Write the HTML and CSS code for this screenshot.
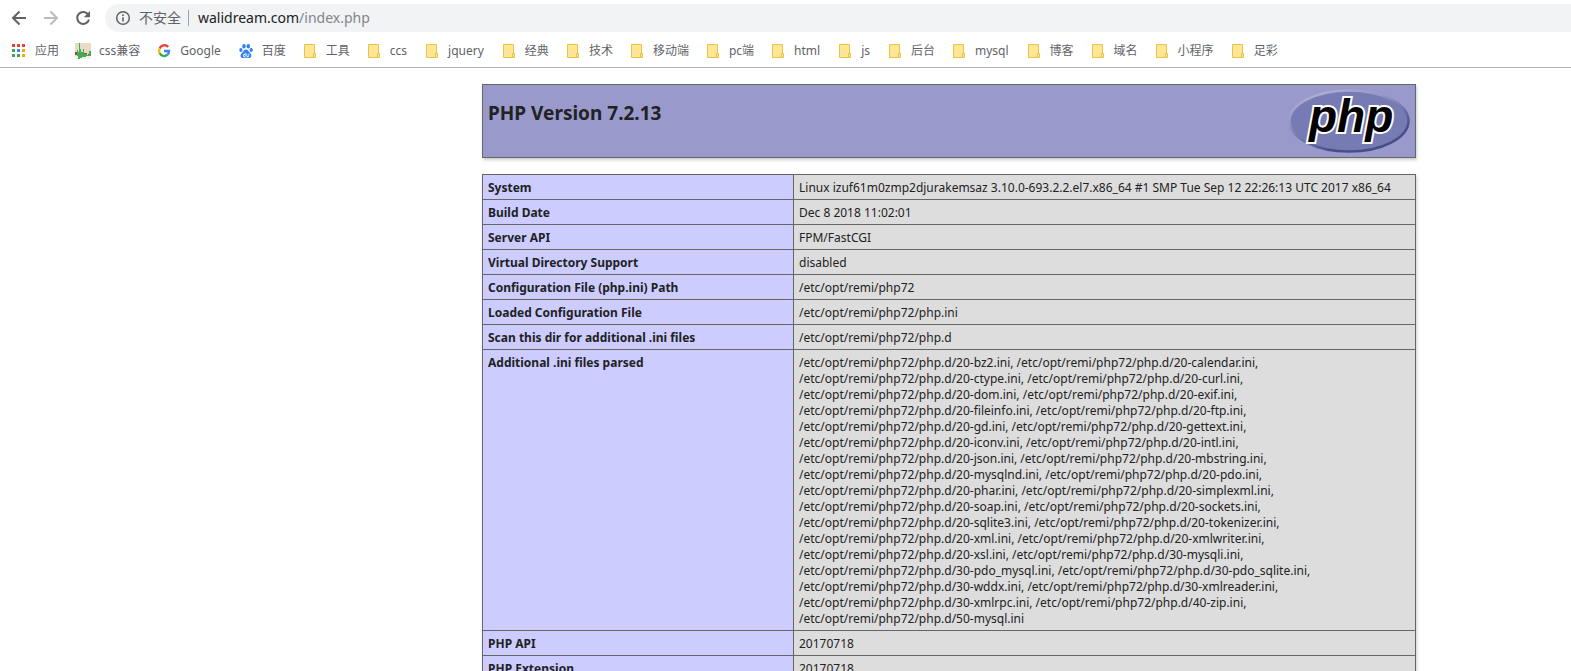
FILE: index.html
```html
<!DOCTYPE html>
<html lang="zh-CN">
<head>
<meta charset="utf-8">
<title>phpinfo()</title>
<link rel="stylesheet" href="styles.css">
</head>
<body>
<svg class="defs" aria-hidden="true">
  <symbol id="folder" viewBox="0 0 16 16">
    <path d="M2.500 1.500h10v13h-10z" fill="#ffe694" stroke="#e8c54a"/>
    <path d="M11.500 14.500v-4h2v4z" fill="#ffe694" stroke="#e8c54a"/>
  </symbol>
</svg>
<header class="browser">
  <div class="toolbar">
    <button class="nav" aria-label="Back"><svg viewBox="0 0 16 16"><path d="M15 8H2.500M8.500 1.500L2 8l6.500 6.500" fill="none" stroke="#5f6368" stroke-width="2"/></svg></button>
    <button class="nav" aria-label="Forward"><svg viewBox="0 0 16 16"><path d="M1 8h12.500M7.500 1.500L14 8l-6.500 6.500" fill="none" stroke="#babcbe" stroke-width="2"/></svg></button>
    <button class="nav" aria-label="Reload"><svg viewBox="0 0 16 16"><path d="M13.300 4.700A6 6 0 1 0 14 9.500" fill="none" stroke="#5f6368" stroke-width="2"/><path d="M15 1v6.200H8.800z" fill="#5f6368"/></svg></button>
    <div class="omnibox">
      <svg class="info" viewBox="0 0 16 16"><circle cx="8" cy="8" r="6.300" fill="none" stroke="#5f6368" stroke-width="1.500"/><path d="M8 7.200v4.300M8 4.300v1.600" stroke="#5f6368" stroke-width="1.600"/></svg>
      <span class="secure">不安全</span>
      <span class="url">walidream.com<span class="path">/index.php</span></span>
    </div>
  </div>
  <nav class="bookmarks">
    <a href="#"><svg viewBox="0 0 16 16"><path d="M1 1h3v3H1zM6 1h3v3H6zM11 1h3v3h-3z" fill="#ea4335"/><path d="M1 6h3v3H1zM1 11h3v3H1zM6 11h3v3H6z" fill="#34a853"/><path d="M6 6h3v3H6z" fill="#2f8cff"/><path d="M11 6h3v3h-3zM11 11h3v3h-3z" fill="#f9a900"/></svg>应用</a>
    <a href="#"><svg viewBox="0 0 16 16"><path d="M0 0h16v16H0z" fill="#e8dcc8"/><path d="M0 13h16v3H0z" fill="#f3efe6"/><path d="M0 9h2v3H0zM9 10h3v2H9zM13 11h2v2h-2z" fill="#d0342c"/><path d="M2 7h1v2h1V0h1v6h1v3h2V6h1v5h3v1h2V8h2v5h-5v1H7v1H5v1H3v-3H2z" fill="#3fae56"/></svg>css兼容</a>
    <a href="#" class="latin"><svg viewBox="0 0 16 16"><g fill="none" stroke-width="2.400"><path d="M12.200 4A5 5 0 0 0 3.700 5.500" stroke="#ea4335"/><path d="M3.700 5.500a5 5 0 0 0 0 4.800" stroke="#fbbc05"/><path d="M3.700 10.300a5 5 0 0 0 7.700 1.400" stroke="#34a853"/><path d="M11.400 11.700A5 5 0 0 0 13 8H8" stroke="#4285f4"/></g></svg>Google</a>
    <a href="#"><svg viewBox="0 0 16 16"><g fill="#2f7df6"><ellipse cx="6" cy="3.300" rx="1.700" ry="2.300"/><ellipse cx="10.300" cy="3.300" rx="1.700" ry="2.300"/><ellipse cx="2.900" cy="7" rx="1.600" ry="2.100"/><ellipse cx="13.200" cy="7" rx="1.600" ry="2.100"/><path d="M8 6.500c2 0 2.300 1.700 3.600 2.900 3 2.500 1.800 5.800-.8 5.600-1.800-.2-3.800-.2-5.600 0-2.600.2-3.900-3.100-.8-5.600C5.700 8.200 6 6.500 8 6.500z"/></g><path d="M7.200 9.500v4H5.500v-2h1.700M8.800 10.500v3h2v-3" fill="none" stroke="#fff" stroke-width=".8"/></svg>百度</a>
    <a href="#"><svg><use href="#folder"/></svg>工具</a>
    <a href="#" class="latin"><svg><use href="#folder"/></svg>ccs</a>
    <a href="#" class="latin"><svg><use href="#folder"/></svg>jquery</a>
    <a href="#"><svg><use href="#folder"/></svg>经典</a>
    <a href="#"><svg><use href="#folder"/></svg>技术</a>
    <a href="#"><svg><use href="#folder"/></svg>移动端</a>
    <a href="#"><svg><use href="#folder"/></svg>pc端</a>
    <a href="#" class="latin"><svg><use href="#folder"/></svg>html</a>
    <a href="#" class="latin"><svg><use href="#folder"/></svg>js</a>
    <a href="#"><svg><use href="#folder"/></svg>后台</a>
    <a href="#" class="latin"><svg><use href="#folder"/></svg>mysql</a>
    <a href="#"><svg><use href="#folder"/></svg>博客</a>
    <a href="#"><svg><use href="#folder"/></svg>域名</a>
    <a href="#"><svg><use href="#folder"/></svg>小程序</a>
    <a href="#"><svg><use href="#folder"/></svg>足彩</a>
  </nav>
</header>
<main class="page">
  <div class="banner">
    <h1>PHP Version 7.2.13</h1>
    <svg class="logo" viewBox="0 0 122 64" role="img" aria-label="PHP logo">
      <defs><linearGradient id="rim" x1=".2" y1="0" x2=".8" y2="1"><stop offset="0" stop-color="#aeb2d5"/><stop offset=".3" stop-color="#9599c6"/><stop offset=".5" stop-color="#777bb3"/><stop offset=".8" stop-color="#484c89"/></linearGradient></defs>
      <ellipse cx="61" cy="32" rx="59.500" ry="30.500" fill="#777bb3" stroke="url(#rim)" stroke-width="2.500"/>
      <text x="21" y="43">php</text>
    </svg>
  </div>
  <table class="info-table">
    <tbody>
    <tr><th scope="row">System</th><td>Linux izuf61m0zmp2djurakemsaz 3.10.0-693.2.2.el7.x86_64 #1 SMP Tue Sep 12 22:26:13 UTC 2017 x86_64</td></tr>
    <tr><th scope="row">Build Date</th><td>Dec 8 2018 11:02:01</td></tr>
    <tr><th scope="row">Server API</th><td>FPM/FastCGI</td></tr>
    <tr><th scope="row">Virtual Directory Support</th><td>disabled</td></tr>
    <tr><th scope="row">Configuration File (php.ini) Path</th><td>/etc/opt/remi/php72</td></tr>
    <tr><th scope="row">Loaded Configuration File</th><td>/etc/opt/remi/php72/php.ini</td></tr>
    <tr><th scope="row">Scan this dir for additional .ini files</th><td>/etc/opt/remi/php72/php.d</td></tr>
    <tr><th scope="row">Additional .ini files parsed</th><td>/etc/opt/remi/php72/php.d/20-bz2.ini, /etc/opt/remi/php72/php.d/20-calendar.ini,<br>
/etc/opt/remi/php72/php.d/20-ctype.ini, /etc/opt/remi/php72/php.d/20-curl.ini,<br>
/etc/opt/remi/php72/php.d/20-dom.ini, /etc/opt/remi/php72/php.d/20-exif.ini,<br>
/etc/opt/remi/php72/php.d/20-fileinfo.ini, /etc/opt/remi/php72/php.d/20-ftp.ini,<br>
/etc/opt/remi/php72/php.d/20-gd.ini, /etc/opt/remi/php72/php.d/20-gettext.ini,<br>
/etc/opt/remi/php72/php.d/20-iconv.ini, /etc/opt/remi/php72/php.d/20-intl.ini,<br>
/etc/opt/remi/php72/php.d/20-json.ini, /etc/opt/remi/php72/php.d/20-mbstring.ini,<br>
/etc/opt/remi/php72/php.d/20-mysqlnd.ini, /etc/opt/remi/php72/php.d/20-pdo.ini,<br>
/etc/opt/remi/php72/php.d/20-phar.ini, /etc/opt/remi/php72/php.d/20-simplexml.ini,<br>
/etc/opt/remi/php72/php.d/20-soap.ini, /etc/opt/remi/php72/php.d/20-sockets.ini,<br>
/etc/opt/remi/php72/php.d/20-sqlite3.ini, /etc/opt/remi/php72/php.d/20-tokenizer.ini,<br>
/etc/opt/remi/php72/php.d/20-xml.ini, /etc/opt/remi/php72/php.d/20-xmlwriter.ini,<br>
/etc/opt/remi/php72/php.d/20-xsl.ini, /etc/opt/remi/php72/php.d/30-mysqli.ini,<br>
/etc/opt/remi/php72/php.d/30-pdo_mysql.ini, /etc/opt/remi/php72/php.d/30-pdo_sqlite.ini,<br>
/etc/opt/remi/php72/php.d/30-wddx.ini, /etc/opt/remi/php72/php.d/30-xmlreader.ini,<br>
/etc/opt/remi/php72/php.d/30-xmlrpc.ini, /etc/opt/remi/php72/php.d/40-zip.ini,<br>
/etc/opt/remi/php72/php.d/50-mysql.ini</td></tr>
    <tr><th scope="row">PHP API</th><td>20170718</td></tr>
    <tr><th scope="row">PHP Extension</th><td>20170718</td></tr>
    </tbody>
  </table>
</main>
</body>
</html>
```
FILE: styles.css
```css
* { box-sizing: border-box; }
html { height: 100%; }
body {
  margin: 0;
  height: 100%;
  overflow: hidden;
  display: flex;
  flex-direction: column;
  background: #fff;
  color: #222;
  font: 12px/16px "Noto Sans", "Noto Sans CJK SC", sans-serif;
}
.defs { position: absolute; width: 0; height: 0; }
.browser { flex: none; border-bottom: 1px solid #b6b6b6; color: #5f6368; }
.toolbar { display: flex; align-items: center; gap: 16px; padding: 4px 0 0 11px; }
.nav { width: 16px; height: 16px; padding: 0; border: 0; background: none; }
.nav svg { display: block; width: 16px; height: 16px; }
.omnibox {
  flex: 1;
  display: flex;
  align-items: center;
  height: 28px;
  margin-left: -2px;
  padding-left: 10px;
  border-radius: 14px 0 0 14px;
  background: #f1f3f4;
  font-size: 14px;
}
.info { width: 16px; height: 16px; margin-right: 8px; }
.secure { padding-right: 7px; border-right: 1px solid #9aa0a6; }
.url { margin-left: 9px; color: #202124; }
.path { color: #80868b; }
.bookmarks { display: flex; gap: 16px; padding: 11px 11px 8px; }
.bookmarks a {
  display: flex;
  align-items: center;
  gap: 8px;
  color: inherit;
  text-decoration: none;
  white-space: nowrap;
}
.bookmarks .latin { padding-right: 1px; }
.bookmarks svg { width: 16px; height: 16px; flex: none; }
.page { flex: 1; min-height: 0; overflow: hidden; padding: 16px 155px 0 16px; }
.banner, .info-table {
  width: 100%;
  max-width: 934px;
  margin: 0 0 16px auto;
  border: 1px solid #666;
  box-shadow: 1px 2px 3px #ccc;
}
.banner {
  display: flex;
  justify-content: space-between;
  align-items: flex-start;
  padding: 4px 5px;
  background: #99c;
}
.banner h1 { margin: 12px 0; font-size: 19px; line-height: 24px; }
.logo { width: 122px; height: 64px; }
.logo text {
  font: italic bold 46px "Liberation Sans", sans-serif;
  fill: #000;
  stroke: #fff;
  stroke-width: 4px;
  paint-order: stroke;
}
.info-table { border-collapse: collapse; }
.info-table th, .info-table td {
  padding: 5px 5px 3px;
  border: 1px solid #666;
  text-align: left;
  vertical-align: top;
}
.info-table th { width: 311px; background: #ccf; }
.info-table td { background: #ddd; }
```
